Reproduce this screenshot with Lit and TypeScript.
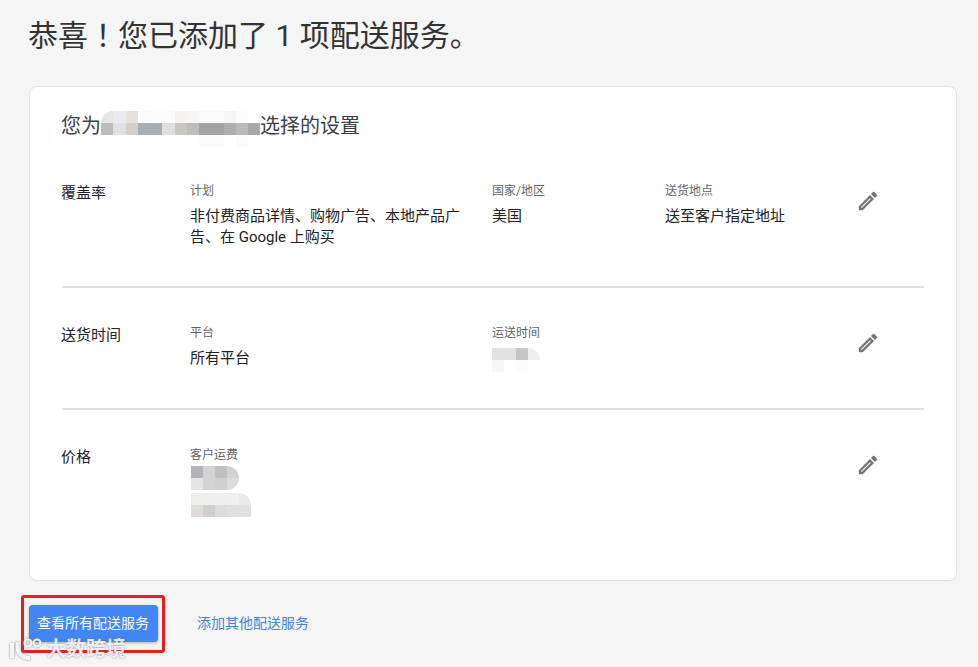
import { LitElement, html, css, svg } from "lit";
import { customElement, property } from "lit/decorators.js";

@customElement("blur-mosaic")
class BlurMosaic extends LitElement {
  @property({ type: Array }) rows: string[][] = [];
  @property({ type: Number }) cw = 12;
  @property({ type: Number }) ch = 12;
  static styles = css`
    :host { display: block; overflow: hidden; border-radius: 0 12px 12px 0; }
    .row { display: flex; }
    .cell { flex: none; }
  `;
  render() {
    return this.rows.map(
      (r) => html`<div class="row">${r.map(
        (c) => html`<div class="cell" style="width:${this.cw}px;height:${this.ch}px;background:${c}"></div>`
      )}</div>`
    );
  }
}

const PENCIL = svg`<path d="M14.06 9.02l.92.92L5.92 19H5v-.92l9.06-9.06M17.66 3c-.25 0-.51.1-.7.29l-1.83 1.83 3.75 3.75 1.83-1.83c.39-.39.39-1.02 0-1.41l-2.34-2.34c-.2-.2-.45-.29-.71-.29zm-3.6 3.19L3 17.25V21h3.75L17.81 9.94l-3.75-3.75z"/>`;

const HEAD_BLUR = [
  ["#e6e6e6", "#e9ebef", "#e4e1df", "#fbfbfb", "#fcfcfc", "#fcfcfc", "#f6f3f1", "#f6f6f6", "#fafafa", "#fbfbfb", "#f5f5f5", "#fcfcfc", "#ffffff"],
  ["#bcbcbc", "#dfe0e3", "#d5cfca", "#a9aeb2", "#a9aeb2", "#dcdfe1", "#cbc6c2", "#bcbebd", "#a3a3a5", "#a3a3a5", "#aeaeae", "#bab9b6", "#a9a9ab"],
  ["#ffffff", "#ffffff", "#ffffff", "#ffffff", "#ffffff", "#ffffff", "#ffffff", "#ffffff", "#fafafa", "#fbfbfb", "#ffffff", "#fafafa", "#ffffff"],
];
const TIME_BLUR = [
  ["#e2e2e2", "#e2e2e2", "#c8c6c3", "#eeeff2"],
  ["#f7f7f7", "#ffffff", "#fcfcfc", "#ffffff"],
];
const FEE_BLUR_A = [
  ["#b4b4b8", "#d3d3d3", "#c0c0c0", "#d2d2d4"],
  ["#e4e4e4", "#d3d3d3", "#d0d0d0", "#dcdcdc"],
];
const FEE_BLUR_B = [
  ["#eeeeee", "#eeeeee", "#efefef", "#eeeeee", "#e9e9eb"],
  ["#dfdbd9", "#d3d0cc", "#dcdce0", "#dfdfe2", "#e0e1e4"],
];

@customElement("app-root")
class AppRoot extends LitElement {
  static styles = css`
    :host {
      display: block;
      position: relative;
      height: 667px;
      overflow: hidden;
      background: #f5f5f5;
      font-family: Roboto, "Noto Sans CJK SC", sans-serif;
      color: #202124;
    }
    * { box-sizing: border-box; }
    .page { padding: 17px 21px 0 29px; }
    h1 {
      margin: 0 0 0 -1px;
      height: 38px;
      font-size: 30px;
      line-height: 38px;
      font-weight: 400;
      white-space: nowrap;
      color: #333;
    }
    .bang { font-family: "Noto Sans CJK JP", sans-serif; line-height: 0; }
    .card {
      margin-top: 31px;
      height: 495px;
      background: #fff;
      border: 1px solid #e0e0e0;
      border-radius: 8px;
      padding: 25px 32px 0 32px;
    }
    .heading {
      display: flex;
      height: 28px;
      margin-left: -1px;
      font-size: 20px;
      line-height: 28px;
      color: #3c4043;
      margin-bottom: 40px;
    }
    .heading blur-mosaic { margin: -1px 0 -7px; height: 36px; width: 159px; border-radius: 12px; }
    .row {
      display: grid;
      grid-template-columns: 128px 302px 173px 1fr 24px;
      padding: 0 45px 0 0;
      align-items: start;
    }
    .row + .row { border-top: 2px solid #e0e0e0; padding-top: 34px; }
    .row.r1 { height: 106px; }
    .row.r2 { height: 122px; }
    .label { font-size: 15px; line-height: 20px; margin-top: 3px; margin-left: -1px; color: #202124; }
    .field-label { font-size: 12px; line-height: 20px; color: #5f6368; padding-top: 1px; height: 21px; margin-bottom: 5px; }
    .value { font-size: 15px; line-height: 21px; max-width: 275px; color: #202124; }
    .edit { width: 24px; height: 24px; margin: 9px 0 0 1px; fill: #757575; stroke: #757575; stroke-width: 0.4; display: block; }
    .time-blur { margin-top: 1px; height: 24px; width: 48px; }
    .fee-a { margin: -4px 0 0 1px; height: 24px; width: 48px; }
    .fee-b { margin: 3px 0 0 1px; height: 24px; width: 60px; border-radius: 0 12px 0 0; }
    .actions {
      display: flex;
      align-items: center;
      gap: 39px;
      margin-top: 24px;
    }
    .primary {
      position: relative;
      height: 37px;
      width: 129px;
      border: 0;
      border-radius: 4px;
      background: #4285f4;
      color: #fff;
      font: inherit;
      font-size: 14px;
      padding: 0 1px 3px 0;
      box-shadow: 0 1px 3px rgba(60, 64, 67, 0.4);
    }
    .primary::after {
      content: "";
      position: absolute;
      left: -8px;
      top: -10px;
      width: 138px;
      height: 52px;
      border: 3px solid #e5201c;
      border-radius: 3px;
      pointer-events: none;
    }
    .link { font-size: 14px; color: #4a7fdb; text-decoration: none; margin-top: -3px; }
    .mark {
      position: absolute;
      left: 8px;
      top: 636px;
      display: flex;
      align-items: center;
      gap: 2px;
      color: rgba(255, 255, 255, 0.85);
      text-shadow: 0 0 2px rgba(110, 110, 110, 0.8);
      font-size: 20px;
      line-height: 24px;
      font-weight: 700;
      pointer-events: none;
    }
    .mark svg { width: 36px; height: 26px; fill: none; stroke: rgba(255, 255, 255, 0.9); stroke-width: 4; filter: drop-shadow(0 0 1px rgba(110, 110, 110, 0.9)); }
  `;

  private edit() {
    return html`<svg class="edit" viewBox="0 0 24 24">${PENCIL}</svg>`;
  }

  render() {
    return html`
      <div class="page">
        <h1>恭喜<span class="bang">！</span>您已添加了 1 项配送服务。</h1>
        <section class="card">
          <div class="heading">
            <span>您为</span>
            <blur-mosaic .rows=${HEAD_BLUR} .cw=${12.25}></blur-mosaic>
            <span>选择的设置</span>
          </div>
          <div class="row r1">
            <div class="label">覆盖率</div>
            <div>
              <div class="field-label">计划</div>
              <div class="value">非付费商品详情、购物广告、本地产品广告、在 Google 上购买</div>
            </div>
            <div>
              <div class="field-label">国家/地区</div>
              <div class="value">美国</div>
            </div>
            <div>
              <div class="field-label">送货地点</div>
              <div class="value">送至客户指定地址</div>
            </div>
            ${this.edit()}
          </div>
          <div class="row r2">
            <div class="label">送货时间</div>
            <div>
              <div class="field-label">平台</div>
              <div class="value">所有平台</div>
            </div>
            <div>
              <div class="field-label">运送时间</div>
              <blur-mosaic class="time-blur" .rows=${TIME_BLUR}></blur-mosaic>
            </div>
            <div></div>
            ${this.edit()}
          </div>
          <div class="row r3">
            <div class="label">价格</div>
            <div>
              <div class="field-label">客户运费</div>
              <blur-mosaic class="fee-a" .rows=${FEE_BLUR_A}></blur-mosaic>
              <blur-mosaic class="fee-b" .rows=${FEE_BLUR_B}></blur-mosaic>
            </div>
            <div></div>
            <div></div>
            ${this.edit()}
          </div>
        </section>
        <div class="actions">
          <button class="primary">查看所有配送服务</button>
          <a class="link" href="#">添加其他配送服务</a>
        </div>
      </div>
      <div class="mark">
        <svg viewBox="0 0 36 26">
          <path d="M4 7v15M10 6c-2 9 2 16 12 16" />
          <circle cx="20" cy="7" r="3.5" stroke-width="2.2" />
          <circle cx="29" cy="7" r="3.5" stroke-width="2.2" />
        </svg>
        <span>大数跨境</span>
      </div>
    `;
  }
}
